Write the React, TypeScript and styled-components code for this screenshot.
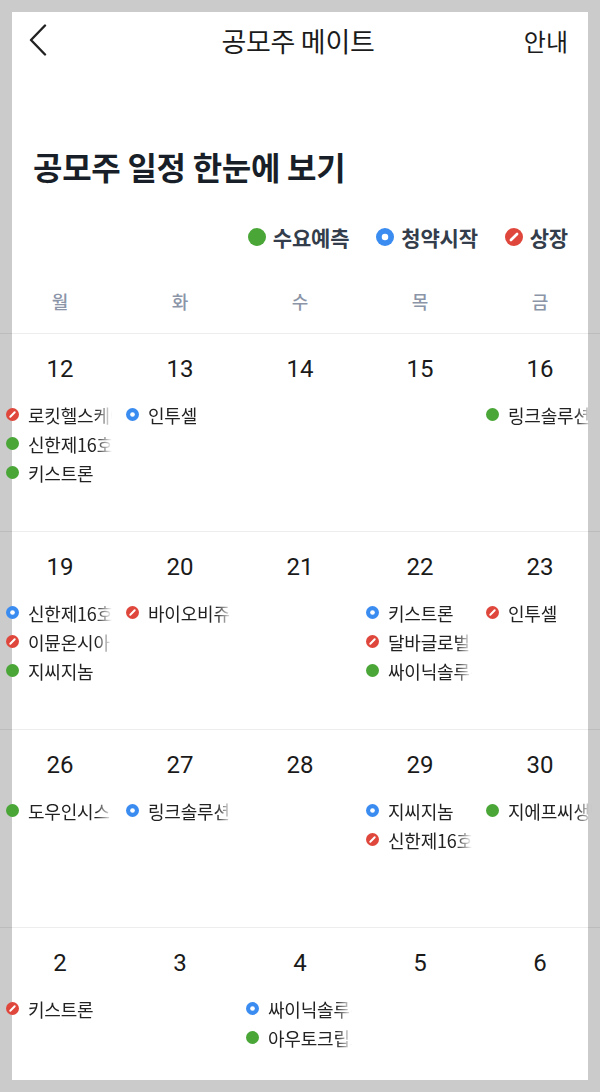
import React from "react";
import styled, { createGlobalStyle } from "styled-components";

const Global = createGlobalStyle`
  html, body { margin: 0; padding: 0; background: #cbcbcb; }
  body { font-family: "Noto Sans CJK KR", "Noto Sans", sans-serif; }
`;

type Kind = "demand" | "sub" | "list";

const COLORS = { demand: "#49a637", sub: "#3b8cf1", list: "#e0473c" };

const Dot: React.FC<{ kind: Kind; size: number }> = ({ kind, size }) => (
  <svg width={size} height={size} viewBox="0 0 20 20" style={{ flex: "none" }}>
    <circle cx="10" cy="10" r="10" fill={COLORS[kind]} />
    {kind === "sub" && <circle cx="10" cy="10" r="3.6" fill="#fff" />}
    {kind === "list" && (
      <line x1="6.6" y1="13.4" x2="13.4" y2="6.6" stroke="#fff" strokeWidth="3" strokeLinecap="round" />
    )}
  </svg>
);

const Card = styled.div`
  margin: 12px;
  height: 1068px;
  background: #fff;
  overflow-x: visible;
  overflow-y: clip;
`;

const Header = styled.header`
  height: 56px;
  display: grid;
  grid-template-columns: 80px 1fr 80px;
  align-items: center;
  padding: 0 20px 0 16px;
  color: #1b1b1b;
`;

const BackBtn = styled.div`
  display: flex;
  align-items: center;
`;

const HeaderTitle = styled.h1`
  margin: 0;
  text-align: center;
  font-size: 27px;
  font-weight: 400;
  letter-spacing: -0.3px;
`;

const HeaderAction = styled.div`
  text-align: right;
  font-size: 24px;
  font-weight: 400;
`;

const PageTitle = styled.h2`
  margin: 78px 0 0 21px;
  height: 40px;
  line-height: 40px;
  font-size: 32px;
  font-weight: 700;
  color: #191f28;
  letter-spacing: -0.3px;
`;

const Legend = styled.div`
  margin-top: 36px;
  height: 30px;
  display: flex;
  justify-content: flex-end;
  align-items: center;
  gap: 27px;
  padding-right: 20px;
`;

const LegendItem = styled.div`
  display: flex;
  align-items: center;
  gap: 7px;
  font-size: 21px;
  font-weight: 700;
  color: #333d4b;
  letter-spacing: -0.2px;
`;

const Grid = styled.div`
  margin: 0 -12px;
`;

const WeekHead = styled.div`
  margin-top: 34px;
  height: 30px;
  display: grid;
  grid-template-columns: repeat(5, 1fr);
  align-items: center;
  margin-bottom: 17px;
`;

const DayName = styled.div`
  text-align: center;
  font-size: 18px;
  font-weight: 500;
  color: #8b95a7;
`;

const Week = styled.div`
  height: 198px;
  border-top: 1px solid rgba(0, 0, 0, 0.07);
  display: grid;
  grid-template-columns: repeat(5, 1fr);
  box-sizing: border-box;
`;

const Cell = styled.div`
  display: flex;
  flex-direction: column;
  min-width: 0;
`;

const DateNum = styled.div`
  margin-top: 21px;
  height: 28px;
  line-height: 28px;
  text-align: center;
  font-family: Roboto, "Noto Sans", sans-serif;
  font-size: 24px;
  color: #1a1a1a;
`;

const EventList = styled.div`
  margin-top: 17px;
  display: flex;
  flex-direction: column;
`;

const EventRow = styled.div`
  height: 29px;
  display: flex;
  align-items: center;
  padding-left: 6px;
  gap: 9px;
`;

const EventName = styled.span`
  width: 84px;
  overflow: hidden;
  white-space: nowrap;
  font-size: 18px;
  color: #222;
  letter-spacing: -0.2px;
  -webkit-mask-image: linear-gradient(to right, #000 68px, transparent 84px);
  mask-image: linear-gradient(to right, #000 68px, transparent 84px);
`;

type Ev = [Kind, string];
type Day = { d: number; ev: Ev[] };

const weeks: Day[][] = [
  [
    { d: 12, ev: [["list", "로킷헬스케어"], ["demand", "신한제16호스팩"], ["demand", "키스트론"]] },
    { d: 13, ev: [["sub", "인투셀"]] },
    { d: 14, ev: [] },
    { d: 15, ev: [] },
    { d: 16, ev: [["demand", "링크솔루션"]] },
  ],
  [
    { d: 19, ev: [["sub", "신한제16호스팩"], ["list", "이뮨온시아"], ["demand", "지씨지놈"]] },
    { d: 20, ev: [["list", "바이오비쥬"]] },
    { d: 21, ev: [] },
    { d: 22, ev: [["sub", "키스트론"], ["list", "달바글로벌"], ["demand", "싸이닉솔루션"]] },
    { d: 23, ev: [["list", "인투셀"]] },
  ],
  [
    { d: 26, ev: [["demand", "도우인시스"]] },
    { d: 27, ev: [["sub", "링크솔루션"]] },
    { d: 28, ev: [] },
    { d: 29, ev: [["sub", "지씨지놈"], ["list", "신한제16호스팩"]] },
    { d: 30, ev: [["demand", "지에프씨생명과학"]] },
  ],
  [
    { d: 2, ev: [["list", "키스트론"]] },
    { d: 3, ev: [] },
    { d: 4, ev: [["sub", "싸이닉솔루션"], ["demand", "아우토크립트"]] },
    { d: 5, ev: [] },
    { d: 6, ev: [] },
  ],
];

export default function App() {
  return (
    <>
      <Global />
      <Card>
        <Header>
          <BackBtn>
            <svg width="20" height="32" viewBox="0 0 20 32" fill="none">
              <path d="M17 1.5 L3 16 L17 30.5" stroke="#222" strokeWidth="2.4" strokeLinecap="round" strokeLinejoin="round" />
            </svg>
          </BackBtn>
          <HeaderTitle>공모주 메이트</HeaderTitle>
          <HeaderAction>안내</HeaderAction>
        </Header>
        <PageTitle>공모주 일정 한눈에 보기</PageTitle>
        <Legend>
          <LegendItem><Dot kind="demand" size={18} />수요예측</LegendItem>
          <LegendItem><Dot kind="sub" size={18} />청약시작</LegendItem>
          <LegendItem><Dot kind="list" size={18} />상장</LegendItem>
        </Legend>
        <Grid>
          <WeekHead>
            {["월", "화", "수", "목", "금"].map((n) => (
              <DayName key={n}>{n}</DayName>
            ))}
          </WeekHead>
          {weeks.map((w, i) => (
            <Week key={i}>
              {w.map((day) => (
                <Cell key={day.d}>
                  <DateNum>{day.d}</DateNum>
                  <EventList>
                    {day.ev.map(([k, name], j) => (
                      <EventRow key={j}>
                        <Dot kind={k} size={13} />
                        <EventName>{name}</EventName>
                      </EventRow>
                    ))}
                  </EventList>
                </Cell>
              ))}
            </Week>
          ))}
        </Grid>
      </Card>
    </>
  );
}
